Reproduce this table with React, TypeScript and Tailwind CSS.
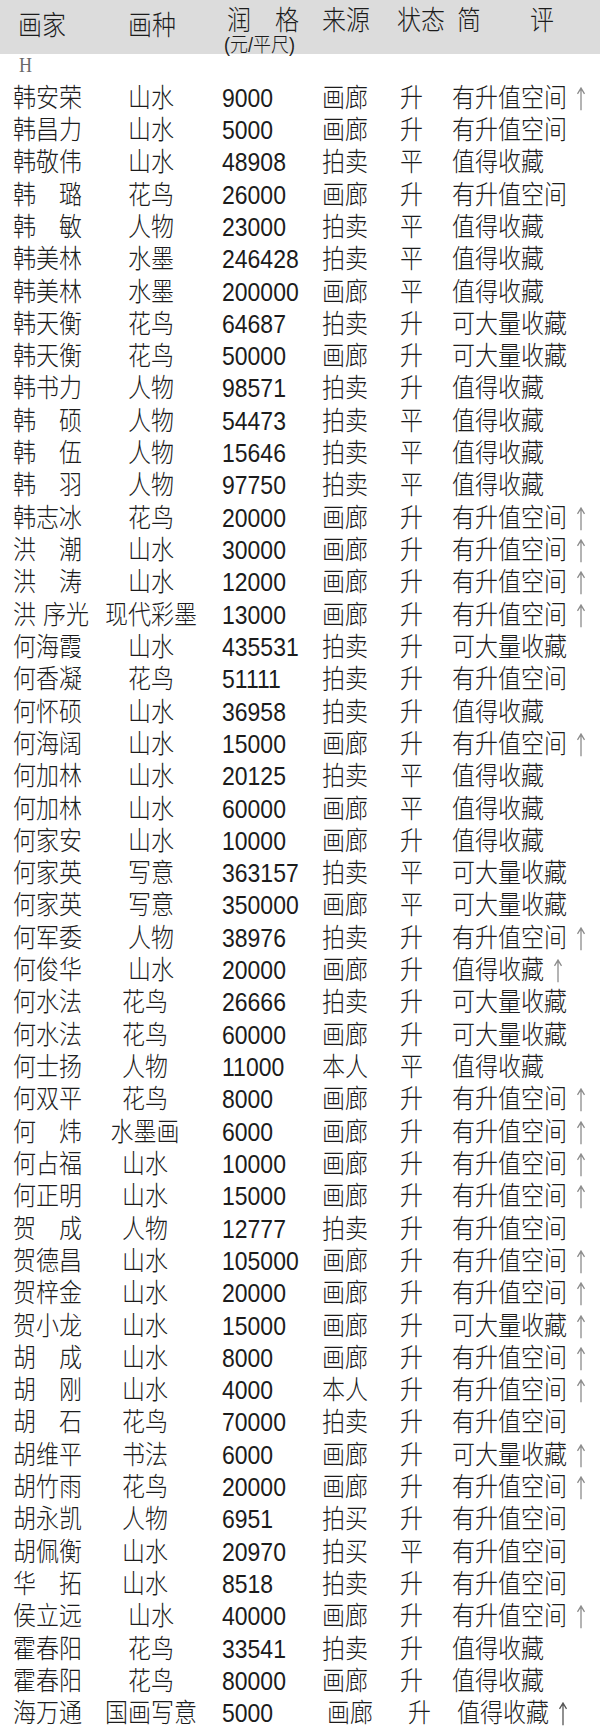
import React from "react";

type Row = [string, string, string, string, string, string, boolean];

const rows: Row[] = [
  ["韩安荣", "山水", "9000", "画廊", "升", "有升值空间", true],
  ["韩昌力", "山水", "5000", "画廊", "升", "有升值空间", false],
  ["韩敬伟", "山水", "48908", "拍卖", "平", "值得收藏", false],
  ["韩 璐", "花鸟", "26000", "画廊", "升", "有升值空间", false],
  ["韩 敏", "人物", "23000", "拍卖", "平", "值得收藏", false],
  ["韩美林", "水墨", "246428", "拍卖", "平", "值得收藏", false],
  ["韩美林", "水墨", "200000", "画廊", "平", "值得收藏", false],
  ["韩天衡", "花鸟", "64687", "拍卖", "升", "可大量收藏", false],
  ["韩天衡", "花鸟", "50000", "画廊", "升", "可大量收藏", false],
  ["韩书力", "人物", "98571", "拍卖", "升", "值得收藏", false],
  ["韩 硕", "人物", "54473", "拍卖", "平", "值得收藏", false],
  ["韩 伍", "人物", "15646", "拍卖", "平", "值得收藏", false],
  ["韩 羽", "人物", "97750", "拍卖", "平", "值得收藏", false],
  ["韩志冰", "花鸟", "20000", "画廊", "升", "有升值空间", true],
  ["洪 潮", "山水", "30000", "画廊", "升", "有升值空间", true],
  ["洪 涛", "山水", "12000", "画廊", "升", "有升值空间", true],
  ["洪 序光", "现代彩墨", "13000", "画廊", "升", "有升值空间", true],
  ["何海霞", "山水", "435531", "拍卖", "升", "可大量收藏", false],
  ["何香凝", "花鸟", "51111", "拍卖", "升", "有升值空间", false],
  ["何怀硕", "山水", "36958", "拍卖", "升", "值得收藏", false],
  ["何海阔", "山水", "15000", "画廊", "升", "有升值空间", true],
  ["何加林", "山水", "20125", "拍卖", "平", "值得收藏", false],
  ["何加林", "山水", "60000", "画廊", "平", "值得收藏", false],
  ["何家安", "山水", "10000", "画廊", "升", "值得收藏", false],
  ["何家英", "写意", "363157", "拍卖", "平", "可大量收藏", false],
  ["何家英", "写意", "350000", "画廊", "平", "可大量收藏", false],
  ["何军委", "人物", "38976", "拍卖", "升", "有升值空间", true],
  ["何俊华", "山水", "20000", "画廊", "升", "值得收藏", true],
  ["何水法", "花鸟", "26666", "拍卖", "升", "可大量收藏", false],
  ["何水法", "花鸟", "60000", "画廊", "升", "可大量收藏", false],
  ["何士扬", "人物", "11000", "本人", "平", "值得收藏", false],
  ["何双平", "花鸟", "8000", "画廊", "升", "有升值空间", true],
  ["何 炜", "水墨画", "6000", "画廊", "升", "有升值空间", true],
  ["何占福", "山水", "10000", "画廊", "升", "有升值空间", true],
  ["何正明", "山水", "15000", "画廊", "升", "有升值空间", true],
  ["贺 成", "人物", "12777", "拍卖", "升", "有升值空间", false],
  ["贺德昌", "山水", "105000", "画廊", "升", "有升值空间", true],
  ["贺梓金", "山水", "20000", "画廊", "升", "有升值空间", true],
  ["贺小龙", "山水", "15000", "画廊", "升", "可大量收藏", true],
  ["胡 成", "山水", "8000", "画廊", "升", "有升值空间", true],
  ["胡 刚", "山水", "4000", "本人", "升", "有升值空间", true],
  ["胡 石", "花鸟", "70000", "拍卖", "升", "有升值空间", false],
  ["胡维平", "书法", "6000", "画廊", "升", "可大量收藏", true],
  ["胡竹雨", "花鸟", "20000", "画廊", "升", "有升值空间", true],
  ["胡永凯", "人物", "6951", "拍买", "升", "有升值空间", false],
  ["胡佩衡", "山水", "20970", "拍买", "平", "有升值空间", false],
  ["华 拓", "山水", "8518", "拍卖", "升", "有升值空间", false],
  ["侯立远", "山水", "40000", "画廊", "升", "有升值空间", true],
  ["霍春阳", "花鸟", "33541", "拍卖", "升", "值得收藏", false],
  ["霍春阳", "花鸟", "80000", "画廊", "升", "值得收藏", false],
  ["海万通", "国画写意", "5000", "画廊", "升", "值得收藏", true],
];

function Arrow({ dark }: { dark?: boolean }) {
  return (
    <svg width="10" height="21" viewBox="0 0 10 21" className="ml-[9px] shrink-0">
      <path
        d="M5 1.5 V21 M1.5 6.5 L5 1.5 L8.5 6.5"
        fill="none"
        stroke={dark ? "#555" : "#8c8c8c"}
        strokeWidth="1.3"
      />
    </svg>
  );
}

function Name({ text }: { text: string }) {
  const parts = text.split(" ");
  if (parts.length === 2 && parts[1].length === 1) {
    return (
      <div className="w-[69px] flex justify-between">
        <span>{parts[0]}</span>
        <span>{parts[1]}</span>
      </div>
    );
  }
  if (parts.length === 2) {
    return (
      <div className="flex">
        <span>{parts[0]}</span>
        <span className="ml-[7px]">{parts[1]}</span>
      </div>
    );
  }
  return <span>{text}</span>;
}

export default function App() {
  return (
    <div className="w-[600px] h-[1730px] bg-white text-[#1c1c1c] font-['Liberation_Sans','Noto_Sans_CJK_SC',sans-serif] overflow-hidden">
      {/* header */}
      <div className="h-[54px] bg-[#dcdcdc] flex items-start text-[24px] leading-none font-light">
        <div className="pl-[18px] w-[128px] pt-[13px] scale-y-[1.14]">画家</div>
        <div className="w-[97px] pt-[13px] scale-y-[1.14]">画种</div>
        <div className="w-[97px] flex flex-col">
          <div className="pt-[8px] pl-[2px] flex scale-y-[1.14]">
            <span>润</span>
            <span className="ml-[24px]">格</span>
          </div>
          <div className="text-[18px] mt-[4px] -ml-[1px] scale-y-[1.14]">(元/平尺)</div>
        </div>
        <div className="w-[75px] pt-[8px] scale-y-[1.14]">来源</div>
        <div className="w-[60px] pt-[8px] scale-y-[1.14]">状态</div>
        <div className="w-[73px] pt-[8px] scale-y-[1.14]">简</div>
        <div className="pt-[8px] scale-y-[1.14]">评</div>
      </div>

      {/* letter index */}
      <div className="h-[28px] pl-[19px] pt-[2px] font-['Liberation_Serif',serif] text-[18px] leading-none text-[#6a6a6a]">
        <span className="inline-block scale-y-[1.15]">H</span>
      </div>

      {/* rows */}
      <div className="flex flex-col">
        {rows.map((r, i) => {
          const last = i === rows.length - 1;
          const mid = i >= 28 && i <= 46;
          return (
            <div key={i} className="h-[32.32px] flex items-center">
              <div className="flex items-center pl-[13px] text-[23px] leading-none font-light scale-y-[1.15]">
                <div className="w-[92px]">
                  <Name text={r[0]} />
                </div>
                <div className={mid ? "w-[92px] text-center -ml-[6px] mr-[6px]" : "w-[92px] text-center"}>{r[1]}</div>
                <div className="w-[125px] pl-[25px] font-normal">{r[2]}</div>
                <div className={last ? "w-[78px] pl-[5px]" : "w-[78px]"}>{r[3]}</div>
                <div className={last ? "w-[52px] pl-[8px]" : "w-[52px]"}>{r[4]}</div>
                <div className={last ? "flex items-center pl-[5px]" : "flex items-center"}>
                  <span>{r[5]}</span>
                  {r[6] && <Arrow dark={last} />}
                </div>
              </div>
            </div>
          );
        })}
      </div>
    </div>
  );
}
